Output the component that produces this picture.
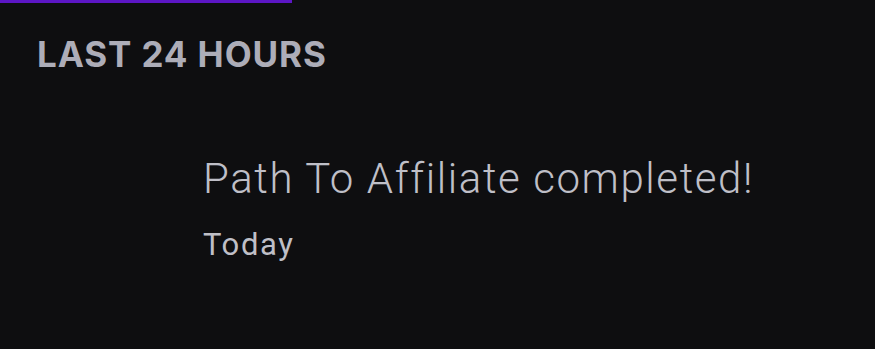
export default function App() {
  return (
    <div className="h-[349px] w-[875px] overflow-hidden bg-[#0e0e10] font-['Roboto',sans-serif]">
      <div className="h-[3px] w-[292px] bg-[#5c16c5]" />
      <div className="px-[37px] pt-[31px]">
        <h2 className="font-['Inter',sans-serif] text-[35px] leading-[40px] font-bold tracking-[0.9px] text-[#adadb8]">
          LAST 24 HOURS
        </h2>
      </div>
      <div className="pl-[203px] pt-[80px]">
        <p className="text-[42px] leading-[50px] font-light tracking-[1.6px] text-[#bfbfc7]">Path To Affiliate completed!</p>
        <p className="mt-[23px] text-[31px] leading-[36px] tracking-[1.6px] text-[#bfbfc7]">Today</p>
      </div>
    </div>
  );
}
